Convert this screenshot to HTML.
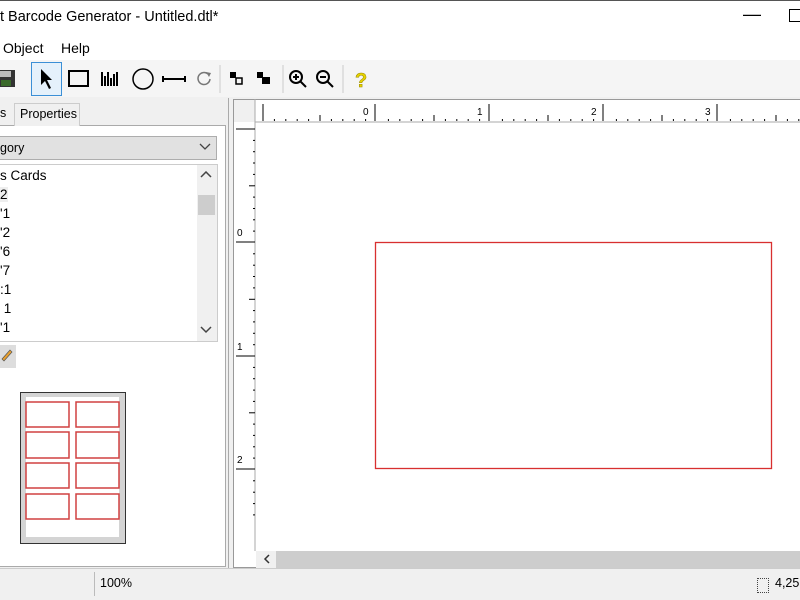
<!DOCTYPE html>
<html><head><meta charset="utf-8"><style>
*{margin:0;padding:0;box-sizing:border-box}
body{width:800px;height:600px;overflow:hidden;background:#f0f0f0;font-family:"Liberation Sans",sans-serif;font-size:13px;color:#000;position:relative}
.a{position:absolute}
</style></head><body>
<div class="a" style="left:0;top:0;width:800px;height:1px;background:#555"></div>
<div class="a" style="left:0;top:1px;width:800px;height:35px;background:#fff"></div>
<div class="a" style="left:0;top:9px;font-size:14.5px">t Barcode Generator - Untitled.dtl*</div>
<div class="a" style="left:743px;top:4px;font-size:18px">&#8212;</div>
<div class="a" style="left:789px;top:9px;width:11px;height:13px;border:1px solid #000;border-right:none"></div>
<div class="a" style="left:0;top:36px;width:800px;height:24px;background:#fff"></div>
<div class="a" style="left:3px;top:40px;font-size:14px">Object</div>
<div class="a" style="left:61px;top:40px;font-size:14px">Help</div>
<div class="a" style="left:0;top:60px;width:800px;height:37px;background:#f5f5f5"></div>
<svg class="a" style="left:0;top:60px" width="400" height="38">
<rect x="-4" y="10" width="19" height="17" fill="#333"/><rect x="-1" y="11" width="12" height="6" fill="#bbb"/><rect x="1" y="20" width="10" height="6" fill="#3a6a2a"/>
<rect x="31.5" y="2.5" width="30" height="33" fill="#e5f1fb" stroke="#3b8fd6"/>
<path d="M41 9 L41 25 L45 21 L49 29 L51 28 L47 20 L52 20 Z" fill="#000"/>
<rect x="69" y="11" width="19" height="15" fill="none" stroke="#000" stroke-width="2"/>
<path d="M102 12v14M105 16v10M108 12v14M111 18v8M114 14v12M117 12v14" stroke="#000" stroke-width="2"/>
<circle cx="143" cy="19" r="10" fill="none" stroke="#000" stroke-width="1.5"/>
<path d="M163 19h22M163 16v6M185 16v6" stroke="#000" stroke-width="2"/>
<path d="M208 14a6 6 0 1 0 2 5" fill="none" stroke="#777" stroke-width="1.5"/><path d="M206 12l5 1-2 4z" fill="#777"/>
<line x1="220" y1="5" x2="220" y2="33" stroke="#ccc"/>
<rect x="230" y="12" width="6" height="6" fill="#000"/><rect x="236" y="18" width="6" height="6" fill="none" stroke="#000" stroke-width="1.5"/>
<rect x="257" y="12" width="6" height="6" fill="#000"/><rect x="262" y="17" width="8" height="7" fill="#000"/>
<line x1="283" y1="5" x2="283" y2="33" stroke="#ccc"/>
<circle cx="296" cy="17" r="6" fill="none" stroke="#000" stroke-width="2"/><path d="M300 21l6 6M293 17h6M296 14v6" stroke="#000" stroke-width="2"/>
<circle cx="323" cy="17" r="6" fill="none" stroke="#000" stroke-width="2"/><path d="M327 21l6 6M320 17h6" stroke="#000" stroke-width="2"/>
<line x1="343" y1="5" x2="343" y2="33" stroke="#ccc"/>
<text x="355" y="27" font-size="20" font-weight="bold" fill="#e6d200" stroke="#9a8a00" stroke-width=".5" font-family="Liberation Sans">?</text>
</svg>
<!-- left panel -->
<div class="a" style="left:0;top:98px;width:229px;height:470px;background:#f0f0f0;border-right:1px solid #aaa"></div>
<div class="a" style="left:0;top:125px;width:226px;height:442px;background:#fff;border:1px solid #aaa;border-left:none"></div>
<div class="a" style="left:0;top:106px;font-size:12.5px">s</div>
<div class="a" style="left:14px;top:103px;width:66px;height:23px;background:#f0f0f0;border:1px solid #ccc;border-bottom:none;font-size:12.5px;padding:3px 0 0 5px">Properties</div>
<div class="a" style="left:0;top:136px;width:217px;height:24px;background:#e1e1e1;border:1px solid #adadad;border-left:none;font-size:12.5px;padding:4px 0 0 0">gory</div>
<svg class="a" style="left:199px;top:143px" width="12" height="8"><path d="M1 1l5 5 5-5" fill="none" stroke="#444" stroke-width="1.3"/></svg>
<div class="a" style="left:0;top:164px;width:218px;height:178px;border:1px solid #ccc;border-left:none;background:#fff"></div>
<div class="a" style="left:197px;top:165px;width:20px;height:176px;background:#f0f0f0"></div>
<div class="a" style="left:198px;top:195px;width:17px;height:20px;background:#cdcdcd"></div>
<svg class="a" style="left:200px;top:171px" width="12" height="8"><path d="M1 6l5-5 5 5" fill="none" stroke="#444" stroke-width="1.5"/></svg>
<svg class="a" style="left:200px;top:326px" width="12" height="8"><path d="M1 1l5 5 5-5" fill="none" stroke="#444" stroke-width="1.5"/></svg>
<div class="a" style="left:0;top:166px;font-size:13.5px;line-height:19px">s Cards<br><span style="background:#eee">2</span><br>'1<br>'2<br>'6<br>'7<br>:1<br>&nbsp;1<br>'1</div>
<div class="a" style="left:0;top:345px;width:16px;height:23px;background:#ddd"></div>
<svg class="a" style="left:0;top:346px" width="14" height="16"><path d="M2 13l8-9 2 2-8 9z" fill="#e8a030" stroke="#555" stroke-width=".7"/></svg>
<div class="a" style="left:20px;top:392px;width:106px;height:152px;background:#d4d4d4;border:1px solid #333"></div>
<div class="a" style="left:26px;top:397px;width:93px;height:140px;background:#fff"></div>
<svg class="a" style="left:0;top:0" width="130" height="530">
<g fill="none" stroke="#d04040" stroke-width="1.5">
<rect x="26" y="402" width="43" height="25"/><rect x="76" y="402" width="43" height="25"/>
<rect x="26" y="432" width="43" height="26"/><rect x="76" y="432" width="43" height="26"/>
<rect x="26" y="463" width="43" height="25"/><rect x="76" y="463" width="43" height="25"/>
<rect x="26" y="494" width="43" height="25"/><rect x="76" y="494" width="43" height="25"/>
</g></svg>
<!-- canvas -->
<div class="a" style="left:233px;top:99px;width:567px;height:469px;background:#fff;border:1px solid #999;border-right:none"></div>
<div class="a" style="left:234px;top:100px;width:21px;height:22px;background:#f0f0f0"></div>
<svg class="a" style="left:233px;top:99px" width="567" height="469" font-family="Liberation Sans" font-size="10">
<line x1="22" y1="0" x2="22" y2="452" stroke="#aaa"/>
<line x1="22" y1="23" x2="567" y2="23" stroke="#aaa"/>
<g stroke="#000">
<line x1="30" y1="5" x2="30" y2="22"/><line x1="142" y1="5" x2="142" y2="22"/><line x1="256" y1="5" x2="256" y2="22"/><line x1="370" y1="5" x2="370" y2="22"/><line x1="484" y1="5" x2="484" y2="22"/>
<line x1="3" y1="30" x2="22" y2="30"/><line x1="3" y1="143" x2="22" y2="143"/><line x1="3" y1="257" x2="22" y2="257"/><line x1="3" y1="370" x2="22" y2="370"/>
</g>
<g fill="#000">
<text x="130" y="16">0</text><text x="244" y="16">1</text><text x="358" y="16">2</text><text x="472" y="16">3</text>
<text x="4" y="137">0</text><text x="4" y="251">1</text><text x="4" y="364">2</text>
</g>
<g stroke="#000" id="tk"></g>
<rect x="142.5" y="143.5" width="396" height="226" fill="none" stroke="#d83030" stroke-width="1.3"/>
<rect x="23" y="452" width="544" height="17" fill="#cdcdcd"/>
<rect x="23" y="452" width="20" height="17" fill="#f0f0f0"/>
<path d="M36 456l-4 4 4 4" fill="none" stroke="#333" stroke-width="1.5"/>
</svg>
<script>
var g=document.getElementById('tk'),s='';
for(var i=0;i<50;i++){var x=30+i*11.4;if(i%10==0)continue;var h=(i%5==0)?6:2;s+='<line x1="'+x.toFixed(1)+'" y1="'+(22-h)+'" x2="'+x.toFixed(1)+'" y2="22"/>';}
for(var j=-1;j<35;j++){var y=30+j*11.35;if(j%10==0||y<24||y>450)continue;var w=(((j%5)+5)%5==0)?6:2;s+='<line x1="'+(22-w)+'" y1="'+y.toFixed(1)+'" x2="22" y2="'+y.toFixed(1)+'"/>';}
g.innerHTML=s;
</script>
<!-- status -->
<div class="a" style="left:0;top:568px;width:800px;height:1px;background:#ccc"></div>
<div class="a" style="left:94px;top:572px;width:1px;height:24px;background:#bbb"></div>
<div class="a" style="left:100px;top:576px;font-size:12.5px">100%</div>
<div class="a" style="left:757px;top:578px;width:12px;height:15px;border:1px dotted #444"></div>
<div class="a" style="left:775px;top:576px;font-size:12.5px">4,25</div>
</body></html>
